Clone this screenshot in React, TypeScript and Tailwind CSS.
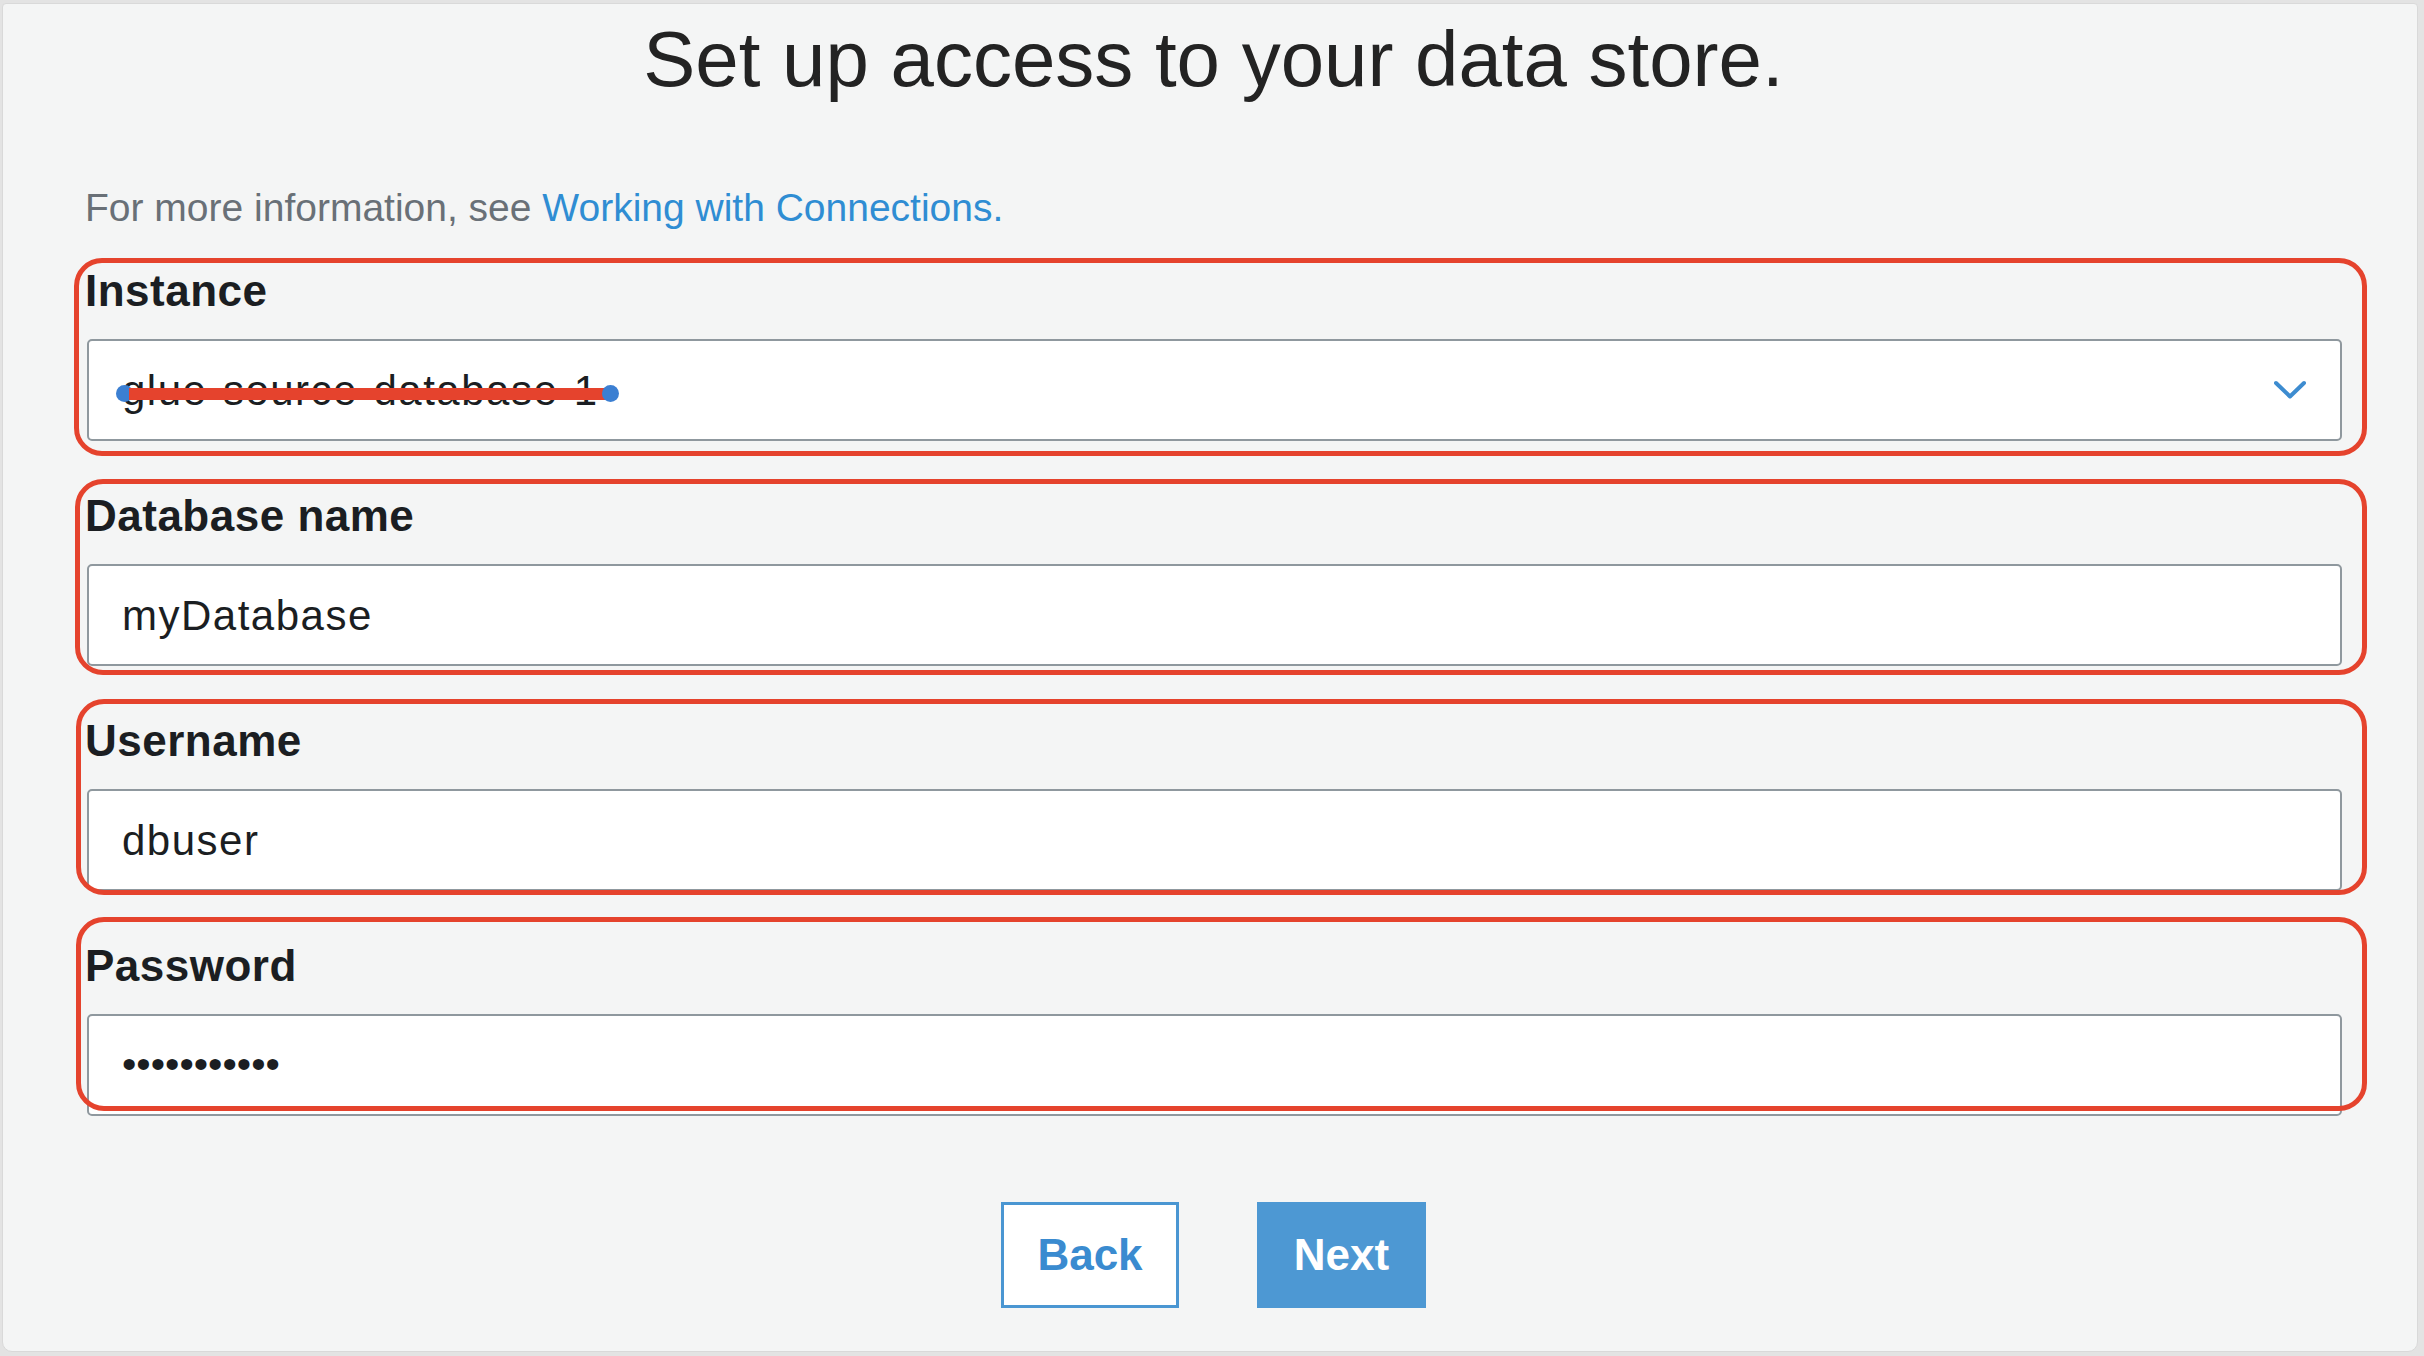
import React from 'react';

type Field = {
  label: string;
  value: string;
  select?: boolean;
  redacted?: boolean;
  masked?: boolean;
  // hand-drawn red outline around each field, offsets differ a little per box
  ring: string;
};

const fields: Field[] = [
  { label: 'Instance', value: 'glue-source-database-1', select: true, redacted: true, ring: 'top-[-11px] bottom-[-15px] left-[-11px] right-[-25px]' },
  { label: 'Database name', value: 'myDatabase', ring: 'top-[-15px] bottom-[-9px] left-[-10px] right-[-25px]' },
  { label: 'Username', value: 'dbuser', ring: 'top-[-20px] bottom-[-4px] left-[-9px] right-[-25px]' },
  { label: 'Password', value: '•••••••••••', masked: true, ring: 'top-[-27px] bottom-[5px] left-[-9px] right-[-25px]' },
];

function ChevronDown() {
  return (
    <svg width="32" height="19" viewBox="0 0 32 19" fill="none" className="absolute right-[34px] top-1/2 -translate-y-1/2">
      <polyline points="2,2.5 16,16 30,2.5" stroke="#3d8cd0" strokeWidth="4" strokeLinecap="round" strokeLinejoin="round" />
    </svg>
  );
}

function FormField({ field }: { field: Field }) {
  return (
    <div className="relative">
      <div className="text-[44px] leading-none font-bold tracking-[0.5px] text-[#1b1e22]">{field.label}</div>
      <div className="relative mt-[26px] ml-[2px] h-[102px] bg-white border-2 border-[#8f989e] rounded-[5px] flex items-center pl-[33px]">
        {field.masked ? (
          <span className="text-[41px] text-[#1b1e22]">{field.value}</span>
        ) : (
          <span className="text-[42px] tracking-[1.5px] text-[#1b1e22]">{field.value}</span>
        )}
        {field.select && <ChevronDown />}
        {field.redacted && (
          <div className="absolute left-[27px] top-[44px] w-[503px] h-[17px] flex items-center pointer-events-none">
            <div className="w-[17px] h-[17px] rounded-full bg-[#3b7fd2] shrink-0" />
            <div className="flex-1 h-[12px] bg-[#e5432d] -mx-[4px]" />
            <div className="w-[17px] h-[17px] rounded-full bg-[#3b7fd2] shrink-0" />
          </div>
        )}
      </div>
      <div className={`absolute ${field.ring} border-[5px] border-[#e5432d] rounded-[28px] pointer-events-none z-10`} />
    </div>
  );
}

export default function App() {
  return (
    <div className="w-[2424px] h-[1356px] bg-[#e3e3e3] pt-[3px] pl-[2px] pr-[6px] pb-[4px] font-['Liberation_Sans',Arial,sans-serif]">
      <div className="h-full bg-[#f4f5f5] border border-[#d9d9d9] rounded-t-[4px] rounded-b-[10px] pl-[82px] pr-[75px] flex flex-col">
        <h1 className="mt-[16px] text-center text-[78px] leading-none text-[#232323]">
          Set up access to your data store.
        </h1>

        <p className="mt-[90px] text-[39px] leading-none text-[#697077]">
          For more information, see <span className="text-[#2f8dd3]">Working with Connections.</span>
        </p>

        <div className="mt-[42px] flex flex-col gap-[53px]">
          {fields.map((f) => (
            <FormField key={f.label} field={f} />
          ))}
        </div>

        <div className="mt-[86px] flex justify-center gap-[78px]">
          <button className="w-[178px] h-[106px] bg-white border-[3px] border-[#4a96d2] text-[#3a8bd0] text-[44px] font-bold">
            Back
          </button>
          <button className="w-[169px] h-[106px] bg-[#4d98d3] text-white text-[44px] font-bold">
            Next
          </button>
        </div>
      </div>
    </div>
  );
}
